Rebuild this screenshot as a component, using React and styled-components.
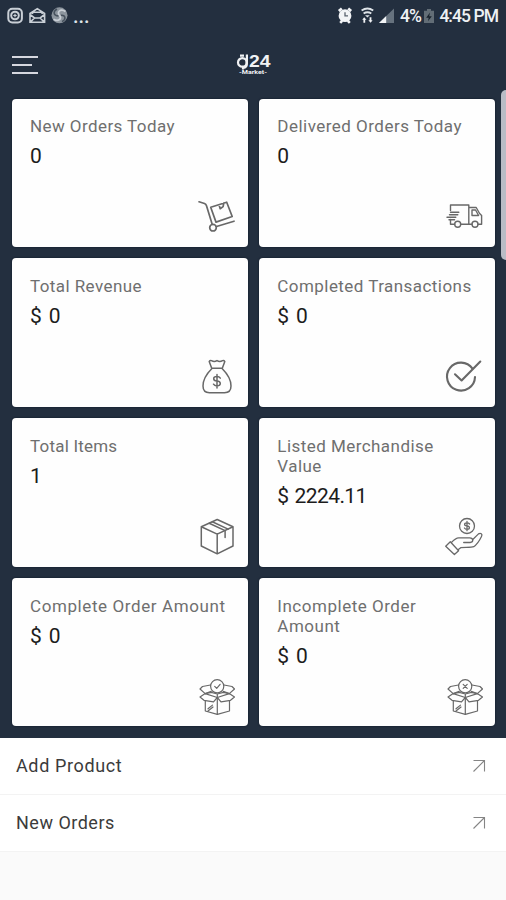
import React from "react"
import styled, { createGlobalStyle } from "styled-components"

const cards = [
  { title: "New Orders Today", value: "0", icon: "trolley", spacing: 0.42 },
  { title: "Delivered Orders Today", value: "0", icon: "truck", spacing: 0.48 },
  { title: "Total Revenue", value: "$ 0", icon: "bag", spacing: 0.42 },
  { title: "Completed Transactions", value: "$ 0", icon: "check", spacing: 0.45 },
  { title: "Total Items", value: "1", icon: "box", spacing: 0.2 },
  { title: "Listed Merchandise Value", value: "$ 2224.11", icon: "hand", spacing: 0.45, tight: true },
  { title: "Complete Order Amount", value: "$ 0", icon: "boxDone", spacing: 0.6 },
  { title: "Incomplete Order Amount", value: "$ 0", icon: "boxFail", spacing: 0.52 },
]

const links = [
  { title: "Add Product", spacing: 0.62 },
  { title: "New Orders", spacing: 0.5 },
]

const OpenBox = ({ children }) => (
  <g strokeWidth="1.2">
    <circle cx="18.2" cy="7.3" r="6.6" />
    {children}
    <path d="M11.5 6 3.5 7.5 1 10l5.2 4.6 6-2.2M25 6l8 1.5 2.5 2.5-5.2 4.6-6-2.2" />
    <path d="M6.2 14.6 1 18l4 3.3 9.5 1.5 3.8-4.3zM30.3 14.6l5.2 3.4-4 3.3-9.5 1.5-3.7-4.3z" />
    <path d="m6.2 14.6 6-1.2 6.1 1.6 6.1-1.6 5.9 1.2M18.3 15v20.3" />
    <path d="M6.3 21.8V32l12 3.3 12.2-3.3V21.8M9 29.8l4.5-3.7M9 32l5-4" />
  </g>
)

const drawings = {
  trolley: (
    <g strokeWidth="1.7">
      <path d="M0 2.8 5.5 4.5q1.5.6 2 2.2l5.6 18.4M17.5 27.5 35 22.2" />
      <circle cx="14" cy="28.7" r="3.3" />
      <path d="m11.7 8.3 16-5.1 5.5 14.3L17 23.1zM20 5.8l1.2 3.9 2.9-2.1.7-3.4" />
    </g>
  ),
  truck: (
    <g strokeWidth="1.4">
      <path d="M3.5 11.5V6h18.3v19.2h-8M3.5 20.5v4.7H7.7M21.8 8.5h7.4l3.4 6 2 2v8.7H31M21.8 25.2H25" />
      <path d="M25 11h3.6l3 5.5H25z" />
      <circle cx="10.7" cy="25.3" r="3" />
      <circle cx="28" cy="25.3" r="3" />
      <path d="M3.5 13.2h8.3M2.5 15.7h8.3M0 18.3h8.8M2 20.7h5.6" />
    </g>
  ),
  bag: (
    <g>
      <path d="M12.7 9.3 10.2 2.5Q11 1 12.5 1.6 15.2 3.4 18 1.6q2.8 1.8 5.5 0 1.5-.6 2.3.9l-2.5 6.8z" />
      <path d="M12.7 9.8C8.5 14 4 20.5 4 27c0 4.5 2.4 6.7 6.5 6.7h15c4.1 0 6.5-2.2 6.5-6.7 0-6.5-4.5-13-8.7-17.2" />
      <path d="M21.3 19.2q-1-1.6-3.3-1.6c-4.4 0-4.4 4.2 0 4.5s4.4 4.8 0 4.8q-2.5 0-3.5-1.7M18 15.5v13.4" />
    </g>
  ),
  check: (
    <g strokeWidth="2.1">
      <path d="M25.5 9.6A14 14 0 1 0 28 18" />
      <path d="m8 15.3 6.6 6.1L33.3 2.6" />
    </g>
  ),
  box: (
    <g>
      <path d="M18.2.5 34 7.8V27l-15.8 7.8L2.3 27V7.8zM2.3 7.8l15.9 7.3L34 7.8M18.2 15.1v19.7" />
      <path d="m10.2 4.2 15.9 7.4v7M13.3 2.8l15.8 7.3" />
    </g>
  ),
  hand: (
    <g strokeWidth="1.3">
      <circle cx="20" cy="7" r="7.5" />
      <path d="M22.6 5Q21.7 3.8 20 3.8c-3.2 0-3.2 2.9 0 3.2s3.2 3.3 0 3.3Q18.2 10.3 17.4 9M20 2.4v9.3" />
      <path d="m-1.3 27.2 4.6-4.5 8.3 9.1-4.2 3.7zM4.3 23.6c2.4-2.6 4.7-4.8 7.4-4.8h11c4 0 4 4.5.5 4.7h-6.5" />
      <path d="m25.5 20.7 6-5.8c2-1.4 4.4.1 3 2.6-2.1 4.3-4.7 8.2-7.8 10.2-2.4 1.2-9.7.4-13 1l-2.3 1.8" />
    </g>
  ),
  boxDone: (
    <OpenBox>
      <path d="m15.7 7.4 2 2 3.4-4.1" />
    </OpenBox>
  ),
  boxFail: (
    <OpenBox>
      <path d="m16.2 5.3 4 4m0-4-4 4" />
    </OpenBox>
  ),
}

const App = () => {
  return (
    <Screen>
      <GlobalStyle />
      <Thumb />
      <StatusBar>
        <svg width="75" height="18" viewBox="7 7 75 18" fill="none" stroke="#c9cfd6" strokeWidth="2">
          <rect x="8.3" y="8.8" width="13.6" height="13.6" rx="4" />
          <circle cx="15" cy="15.5" r="3.8" />
          <path d="M13.3 15.5h3.4M15 13.8v3.4" strokeWidth="1.2" />
          <path d="M30 13.5v8.7h14.6v-8.7L37.3 8.6zM32.5 14v-1.8h9.6V14M30 14.5l4.5 3.5h5.6l4.5-3.5M30.5 21.8l4-3.8M44.1 21.8l-4-3.8" strokeWidth="1.6" />
          <circle cx="59.5" cy="15.3" r="8" fill="#8c959e" stroke="none" />
          <path d="M65.5 11.5c-5-3.5-9 .5-6 4 3 3-1 6.5-6 3.7" stroke="#c9cfd6" strokeWidth="1.8" />
          <path d="M57 9c-4.5 2.5-3.5 7 1.5 7M62 21.7c4.5-2.5 3.5-7-1-6.5" stroke="#47525e" strokeWidth="1.5" />
        </svg>
        <Dots>...</Dots>
        <StatusGroup>
          <svg width="59" height="18" viewBox="337 7 59 18" fill="none">
            <circle cx="345" cy="15.7" r="6.4" fill="#f2f4f6" />
            <path d="m338.8 11 3-2.6M351.2 11l-3-2.6M340.2 22.8l2-2M349.8 22.8l-2-2" stroke="#f2f4f6" strokeWidth="2.6" />
            <path d="M345 12.3v3.6h3" stroke="#59636e" strokeWidth="1.3" />
            <path d="M361.6 10.5q5.9-3.8 11.6 0M363.6 13.5q3.8-2.6 7.7 0" stroke="#dfe4e8" strokeWidth="2" />
            <path d="m365 15.3 2.4 2.3 2.4-2.3z" fill="#dfe4e8" />
            <path d="m364.2 17.3-2 2.5h1.2v3h1.8v-3h1.2zM370.6 22.8l2-2.5h-1.2v-3h-1.8v3h-1.2z" fill="#f2f4f6" />
            <path d="M379 23 394 8.5V23z" fill="#66727e" />
            <path d="M379 23h7.2v-7z" fill="#f2f4f6" />
          </svg>
          <StatusText $width={20}>4%</StatusText>
          <svg width="10" height="15" viewBox="0 0 10 17" preserveAspectRatio="none">
            <path d="M3 0h4v2h3v14H0V2h3z" fill="#626d76" />
            <path d="M6 4 2.2 9.8h2.5L4 14l3.8-5.7H5.2z" fill="#18222d" />
          </svg>
          <StatusText $last>4:45 PM</StatusText>
        </StatusGroup>
      </StatusBar>

      <Header>
        <MenuButton aria-label="Menu">
          <Line $width={26} />
          <Line $width={20} />
          <Line $width={26} />
        </MenuButton>
        <Logo viewBox="0 0 38 24">
          <circle cx="7.3" cy="9.4" r="4.3" />
          <path d="M5 2.6h4M11.9 1.6v9q0 4-3.6 4.4M8 13.5v3" />
          <LogoText x="14" y="14" textLength="21.5" lengthAdjust="spacingAndGlyphs">24</LogoText>
          <LogoSub x="4" y="20.6" textLength="28" lengthAdjust="spacingAndGlyphs">-Market-</LogoSub>
        </Logo>
      </Header>

      <Grid>
        {cards.map((card) => (
          <Card key={card.title}>
            <CardTitle $spacing={card.spacing}>{card.title}</CardTitle>
            <CardValue $tight={card.tight}>{card.value}</CardValue>
            <CardIcon viewBox="0 0 36 36">{drawings[card.icon]}</CardIcon>
          </Card>
        ))}
      </Grid>

      <List>
        {links.map((link) => (
          <Row key={link.title}>
            <RowTitle $spacing={link.spacing}>{link.title}</RowTitle>
            <svg width="14" height="14" viewBox="0 0 14 14" fill="none" stroke="#858585" strokeWidth="1.1">
              <path d="M1.5 1.5h11v11M12.5 1.5l-11 11" />
            </svg>
          </Row>
        ))}
      </List>
    </Screen>
  )
}

export default App

const GlobalStyle = createGlobalStyle`
body {
  margin: 0;
  background-color: #fafafa;
  font-family: Roboto, "Liberation Sans", sans-serif;
}
`
const Screen = styled.div`
position: relative;
width: 506px;
height: 900px;
overflow: hidden;
background-color: #fafafa;
`
const Thumb = styled.div`
position: absolute;
top: 90px;
right: -5px;
width: 10px;
height: 170px;
border-radius: 5px;
background-color: #b9bcc6;
`
const StatusBar = styled.div`
display: flex;
align-items: center;
box-sizing: border-box;
height: 32px;
padding: 0 8px 0 7px;
background-color: #232f3f;
`
const StatusGroup = styled.div`
display: flex;
align-items: center;
width: 161px;
margin-left: auto;
`
const Dots = styled.span`
margin-left: -9px;
color: #dfe4e8;
font-size: 20px;
font-weight: 500;
line-height: 24px;
`
const StatusText = styled.span`
width: ${(props) => (props.$width ? `${props.$width}px` : "auto")};
margin-left: ${(props) => (props.$last ? "auto" : "4px")};
margin-right: ${(props) => (props.$last ? "0" : "4px")};
color: #eef1f4;
font-size: 17.5px;
font-weight: 500;
letter-spacing: ${(props) => (props.$last ? "-0.95px" : "-1px")};
white-space: nowrap;
`
const Header = styled.header`
display: flex;
align-items: center;
box-sizing: border-box;
height: 66px;
padding: 0 12px 1px;
background-color: #232f3f;
`
const MenuButton = styled.button`
display: flex;
flex-direction: column;
justify-content: space-between;
width: 26px;
height: 18px;
padding: 0;
border: none;
background: none;
`
const Line = styled.span`
width: ${(props) => props.$width}px;
height: 2px;
background-color: #d5d7df;
`
const Logo = styled.svg`
width: 38px;
height: 24px;
margin-left: 197px;
fill: none;
stroke: #f0f2f4;
stroke-width: 2.2;
`
const LogoText = styled.text`
fill: #f0f2f4;
stroke: none;
font-family: "Liberation Sans", sans-serif;
font-size: 16px;
font-weight: 700;
`
const LogoSub = styled.text`
fill: #f0f2f4;
stroke: none;
font-size: 5.5px;
font-weight: 700;
`
const Grid = styled.main`
display: grid;
grid-template-columns: 236px 236px;
grid-auto-rows: 148.4px;
gap: 11.4px 11.3px;
box-sizing: border-box;
height: 640px;
padding: 0.6px 12px 0;
background-color: #232f3f;
`
const Card = styled.section`
display: flex;
flex-direction: column;
box-sizing: border-box;
padding: 17.6px 13px 11.6px 18px;
border-radius: 4px;
background-color: #fefefe;
box-shadow: 0 0 2px #0b1524;

&:nth-child(even) {
  padding-right: 12.3px;
}
`
const CardTitle = styled.h2`
margin: 0 8px 0 0;
color: #6f6f6f;
font-size: 17px;
font-weight: 400;
line-height: 20.3px;
letter-spacing: ${(props) => props.$spacing}px;
`
const CardValue = styled.div`
margin-top: 7px;
color: #1c1c1c;
font-size: 21px;
line-height: 26px;
letter-spacing: ${(props) => (props.$tight ? "-0.6px" : "0")};
word-spacing: ${(props) => (props.$tight ? "1.5px" : "1.8px")};
`
const CardIcon = styled.svg`
width: 36px;
height: 36px;
margin-top: auto;
align-self: flex-end;
overflow: visible;
fill: none;
stroke: #686868;
stroke-width: 1.5;
stroke-linejoin: round;
stroke-linecap: round;
`
const List = styled.nav`
display: flex;
flex-direction: column;
`
const Row = styled.a`
display: flex;
align-items: center;
justify-content: space-between;
box-sizing: border-box;
height: 56.8px;
padding: 0 20px 0 16px;
border-bottom: 1px solid #f3f3f3;
background-color: #ffffff;
`
const RowTitle = styled.span`
color: #3b3b3b;
font-size: 18px;
letter-spacing: ${(props) => props.$spacing}px;
`
